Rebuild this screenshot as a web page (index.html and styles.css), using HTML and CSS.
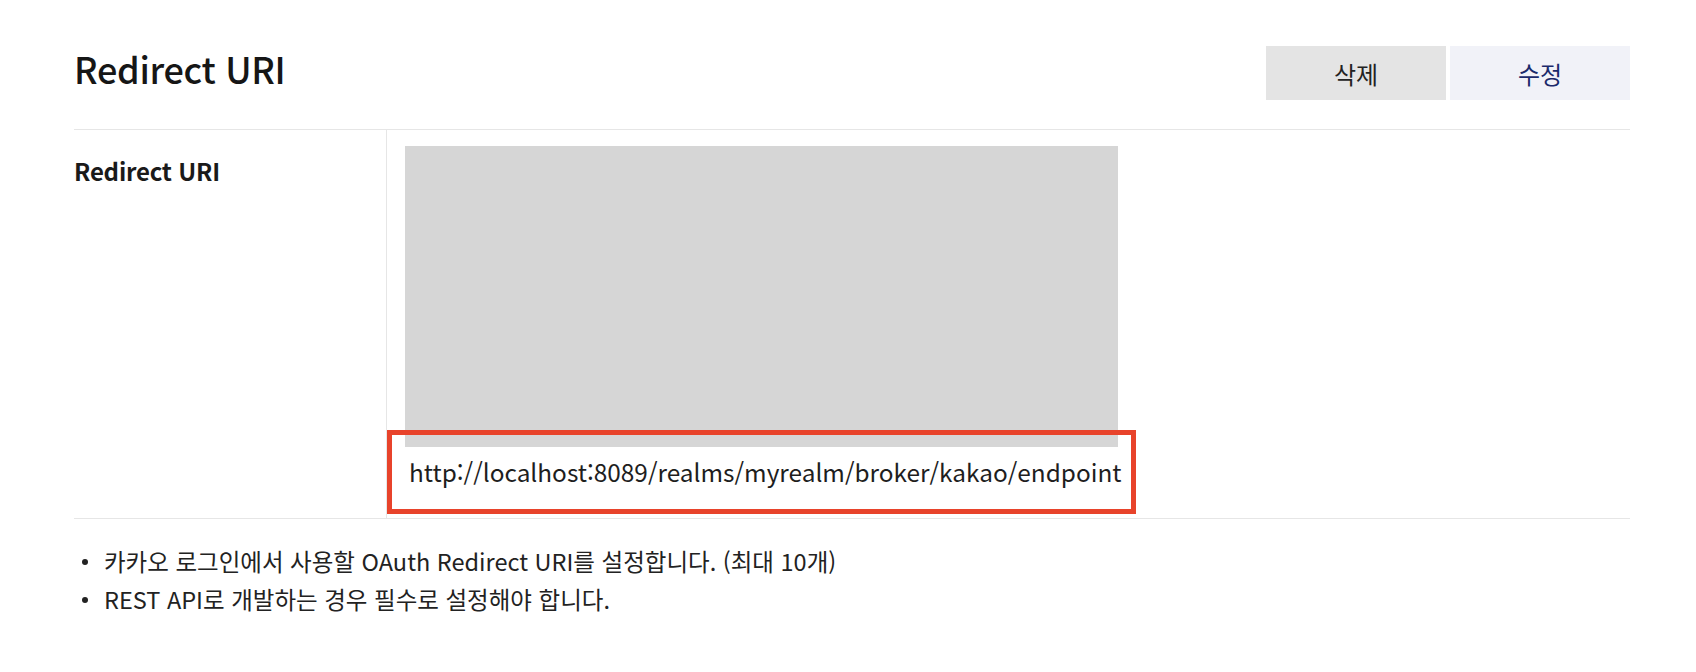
FILE: index.html
```html
<!DOCTYPE html>
<html lang="ko">
<head>
<meta charset="utf-8">
<title>Redirect URI</title>
<link rel="stylesheet" href="styles.css">
</head>
<body>
<section class="panel">
  <header class="panel-head">
    <h2 class="panel-title">Redirect URI</h2>
    <div class="actions">
      <button class="btn btn-delete" type="button">삭제</button>
      <button class="btn btn-edit" type="button">수정</button>
    </div>
  </header>
  <div class="row">
    <div class="row-label">Redirect URI</div>
    <div class="row-value">
      <div class="preview"></div>
      <div class="uri">http://localhost:8089/realms/myrealm/broker/kakao/endpoint</div>
      <div class="highlight"></div>
    </div>
  </div>
  <ul class="notes">
    <li>카카오 로그인에서 사용할 OAuth Redirect URI를 설정합니다. (최대 10개)</li>
    <li>REST API로 개발하는 경우 필수로 설정해야 합니다.</li>
  </ul>
</section>
</body>
</html>
```
FILE: styles.css
```css
* { box-sizing: border-box; }
body {
  margin: 0;
  background: #fff;
  font-family: "Noto Sans CJK KR", "Noto Sans", sans-serif;
  color: #1e1e1e;
}
.panel {
  margin-left: 74px;
  width: 1556px;
  padding-top: 46px;
}
.panel-head {
  display: flex;
  justify-content: space-between;
  align-items: flex-start;
  height: 83px;
}
.panel-title {
  margin: 2px 0 0 0;
  font-size: 36px;
  line-height: 40px;
  font-weight: 500;
  letter-spacing: -0.3px;
  color: #161616;
}
.actions {
  display: flex;
  gap: 4px;
}
.btn {
  width: 180px;
  height: 54px;
  border: 0;
  padding: 0;
  font-family: inherit;
  font-size: 24px;
  cursor: pointer;
}
.btn-delete { background: #e4e4e4; color: #222; }
.btn-edit { background: #f1f2f8; color: #1b2a6b; }
.row {
  display: flex;
  border-top: 1px solid #e6e6e6;
  border-bottom: 1px solid #e6e6e6;
}
.row-label {
  width: 313px;
  border-right: 1px solid #e6e6e6;
  padding-top: 23px;
  font-size: 24px;
  line-height: 36px;
  font-weight: 700;
  letter-spacing: -0.2px;
  color: #1a1a1a;
}
.row-value {
  position: relative;
  flex: 1;
  padding: 16px 0 28px 18px;
}
.preview {
  width: 713px;
  height: 301px;
  background: #d6d6d6;
}
.uri {
  margin: 7px 0 0 4px;
  font-size: 24.4px;
  line-height: 36px;
  color: #1e1e1e;
}
.highlight {
  position: absolute;
  left: 0;
  top: 300px;
  width: 749px;
  height: 84px;
  border: 5px solid #e8432b;
}
.notes {
  list-style: none;
  margin: 23px 0 0;
  padding: 0;
  font-size: 23.5px;
  line-height: 38px;
  color: #222;
}
.notes li {
  position: relative;
  padding-left: 30px;
}
.notes li::before {
  content: "";
  position: absolute;
  left: 8px;
  top: 17px;
  width: 6px;
  height: 6px;
  border-radius: 50%;
  background: #222;
}
```
